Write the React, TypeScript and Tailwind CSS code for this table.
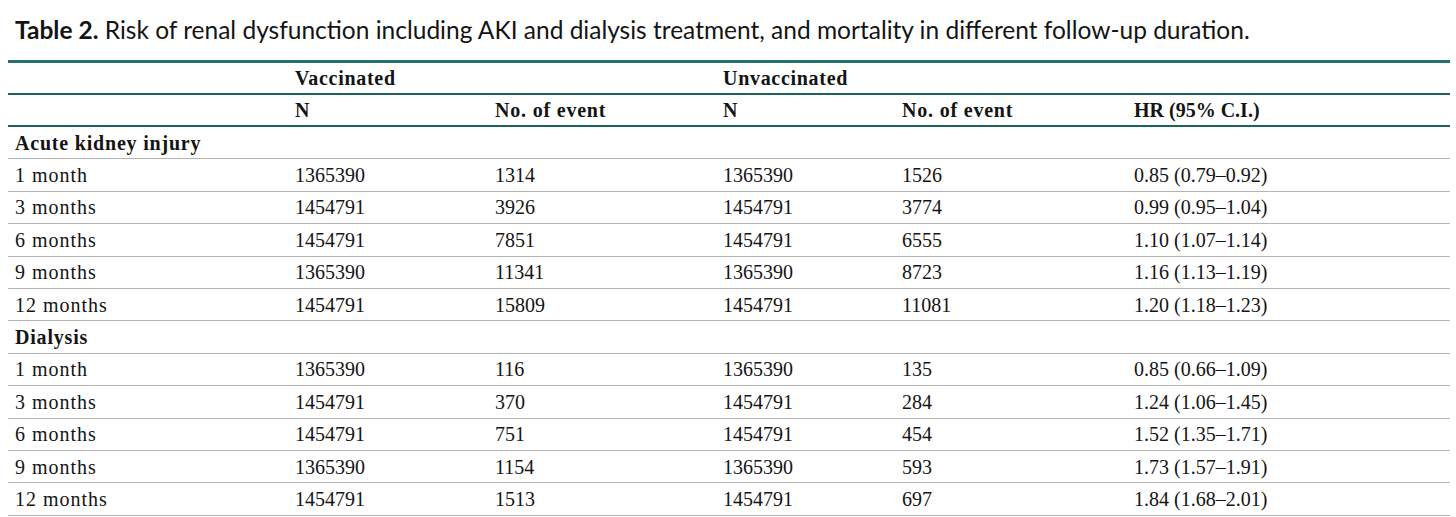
const cols = "grid grid-cols-[280px_200px_228px_179px_232px_323px]";

type Row = [string, string, string, string, string, string];

const aki: Row[] = [
  ["1 month", "1365390", "1314", "1365390", "1526", "0.85 (0.79–0.92)"],
  ["3 months", "1454791", "3926", "1454791", "3774", "0.99 (0.95–1.04)"],
  ["6 months", "1454791", "7851", "1454791", "6555", "1.10 (1.07–1.14)"],
  ["9 months", "1365390", "11341", "1365390", "8723", "1.16 (1.13–1.19)"],
  ["12 months", "1454791", "15809", "1454791", "11081", "1.20 (1.18–1.23)"],
];

const dialysis: Row[] = [
  ["1 month", "1365390", "116", "1365390", "135", "0.85 (0.66–1.09)"],
  ["3 months", "1454791", "370", "1454791", "284", "1.24 (1.06–1.45)"],
  ["6 months", "1454791", "751", "1454791", "454", "1.52 (1.35–1.71)"],
  ["9 months", "1365390", "1154", "1365390", "593", "1.73 (1.57–1.91)"],
  ["12 months", "1454791", "1513", "1454791", "697", "1.84 (1.68–2.01)"],
];

function DataRow({ row }: { row: Row }) {
  return (
    <div className={`${cols} h-[32.4px] items-center border-b border-[#b4b4b4]`}>
      {row.map((cell, i) => (
        <div key={i} className={i === 0 ? "pl-[7px] whitespace-nowrap tracking-[1px]" : "pl-[7px] whitespace-nowrap"}>
          {cell}
        </div>
      ))}
    </div>
  );
}

function SectionRow({ label }: { label: string }) {
  return (
    <div className="h-[32.4px] flex items-center border-b border-[#b4b4b4] pl-[7px] font-bold tracking-[0.8px]">
      {label}
    </div>
  );
}

export default function App() {
  return (
    <div className="w-[1456px] h-[517px] bg-white overflow-hidden text-[#141414]">
      {/* Caption */}
      <div className="h-[60px] pl-[15px] pt-[16px] text-[24.5px] leading-[28px] font-['Lato',sans-serif] whitespace-nowrap">
        <span className="font-bold">Table 2.</span> Risk of renal dysfunction including AKI and dialysis treatment, and
        mortality in different follow-up duration.
      </div>

      {/* Table */}
      <div className="ml-[8px] w-[1442px] font-['Liberation_Serif',serif] text-[20px]">
        <div className="border-t-[3px] border-[#27706d]">
          <div className={`${cols} h-[32px] items-center border-b-2 border-[#1f5f5c] font-bold tracking-[0.7px]`}>
            <div />
            <div className="pl-[7px]">Vaccinated</div>
            <div />
            <div className="pl-[7px]">Unvaccinated</div>
            <div />
            <div />
          </div>
          <div className={`${cols} h-[32px] items-center border-b-2 border-[#1f5f5c] font-bold tracking-[0.8px]`}>
            <div />
            <div className="pl-[7px]">N</div>
            <div className="pl-[7px]">No. of event</div>
            <div className="pl-[7px]">N</div>
            <div className="pl-[7px]">No. of event</div>
            <div className="pl-[7px] tracking-normal">HR (95% C.I.)</div>
          </div>
        </div>

        <SectionRow label="Acute kidney injury" />
        {aki.map((r) => (
          <DataRow key={"a" + r[0]} row={r} />
        ))}
        <SectionRow label="Dialysis" />
        {dialysis.map((r) => (
          <DataRow key={"d" + r[0]} row={r} />
        ))}
      </div>
    </div>
  );
}
